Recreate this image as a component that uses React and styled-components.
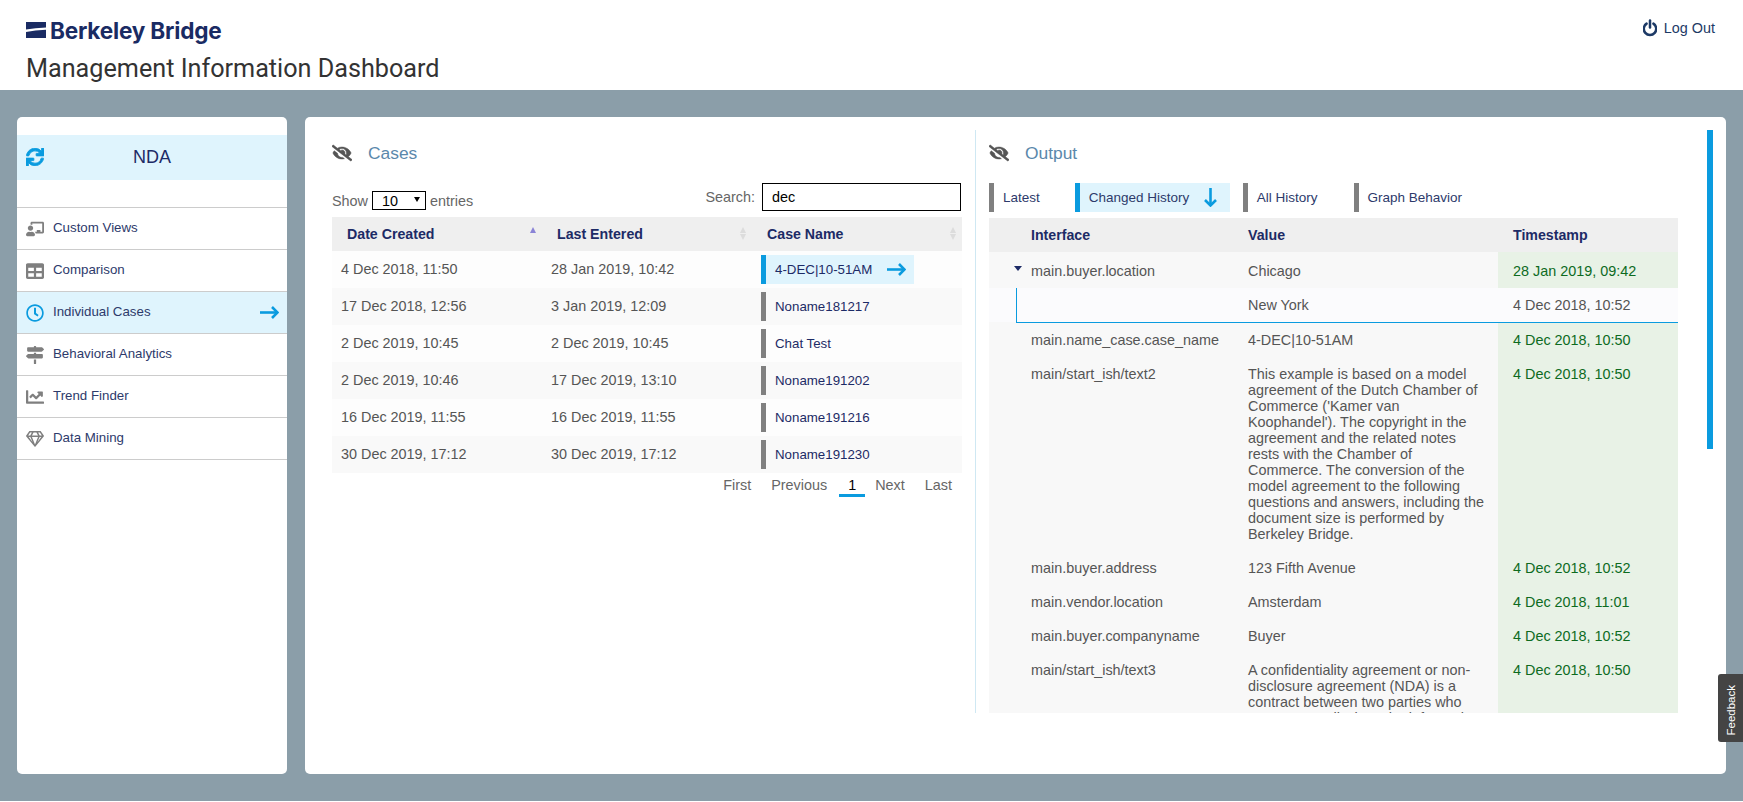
import React from "react";
import styled, { createGlobalStyle } from "styled-components";
import {
  FaChalkboardTeacher, FaTable, FaRegClock, FaMapSigns, FaChartLine, FaRegGem,
  FaEyeSlash, FaSync,
} from "react-icons/fa";

const Global = createGlobalStyle`
  html, body { margin: 0; padding: 0; background: #fff; }
  body { font-family: "Liberation Sans", Arial, sans-serif; font-size: 14.4px; color: #555; }
  * { box-sizing: border-box; }
`;

const Page = styled.div`display: flex; flex-direction: column; height: 801px; overflow: hidden;`;
const Header = styled.header`
  height: 90px; flex: none; background: #fff; padding: 0 28px 0 26px;
  display: flex; justify-content: space-between; align-items: flex-start;
`;
const Brand = styled.div`display: flex; flex-direction: column;`;
const Logo = styled.div`
  display: flex; align-items: center; gap: 4px; height: 24px; margin-top: 18px;
  font-family: Inter, sans-serif; font-weight: 700; font-size: 22.6px; letter-spacing: -0.2px; color: #1a2b63;
`;
const Title = styled.h1`
  margin: 9px 0 0; font-family: Roboto, sans-serif; font-weight: 400; font-size: 25.2px; line-height: 36px; color: #333;
`;
const LogOut = styled.a`
  display: flex; align-items: center; gap: 7px; margin-top: 18px; color: #1d3a66; font-size: 14.4px; line-height: 20px;
`;
const Main = styled.main`
  flex: 1; background: #8b9ea9; padding: 27px 17px; display: flex; gap: 18px; min-height: 0;
`;
const Sidebar = styled.aside`
  width: 270px; flex: none; background: #fff; border-radius: 5px; padding-top: 18px;
`;
const Project = styled.div`
  position: relative; height: 45px; background: #dff4fd; display: flex; align-items: center; justify-content: center;
  font-size: 18px; color: #1d2b66; margin-bottom: 27px;
  svg { position: absolute; left: 9px; top: 13px; color: #0a9bdf; stroke: currentColor; stroke-width: 24; }
`;
const Menu = styled.nav`border-top: 1px solid #ccc;`;
const MenuItem = styled.div`
  height: 42px; border-bottom: 1px solid #ccc; display: flex; align-items: center; padding: 0 8px 0 9px; gap: 9px;
  font-size: 13.3px; color: #2d3a6b;
  background: ${(p) => (p.$active ? "#dff4fd" : "#fff")};
  & > svg:first-child { color: ${(p) => (p.$active ? "#0a9bdf" : "#7f7f7f")}; width: 18px; flex: none; }
`;
const MenuLabel = styled.span`margin-bottom: 2px; flex: 1;`;
const Panel = styled.section`
  position: relative; flex: 1; background: #fff; border-radius: 5px; padding-top: 13px; display: flex; min-width: 0;
`;
const CasesPane = styled.div`
  width: 671px; height: 583px; flex: none; padding: 0 13px 0 27px; border-right: 1px solid #cfe8f3;
`;
const OutputPane = styled.div`width: 702px; height: 583px; padding-left: 13px; overflow: hidden;`;
const PaneTitle = styled.div`
  display: flex; align-items: center; gap: 16px; height: 46px; font-size: 17.4px; color: #5b88ab;
  svg { color: #555; width: 20px; height: 20px; stroke: currentColor; stroke-width: 16; }
`;
const Toolbar = styled.div`display: flex; justify-content: space-between; align-items: flex-end; height: 35px; margin-top: 6px; font-size: 14.4px; color: #666;`;
const Show = styled.label`display: flex; align-items: center; gap: 4px; height: 19px; margin-bottom: 7px;`;
const SelectWrap = styled.span`
  position: relative; display: block; width: 54px; height: 19px;
  &::after {
    content: ""; position: absolute; right: 6px; top: 6px; pointer-events: none;
    border-left: 3.5px solid transparent; border-right: 3.5px solid transparent; border-top: 5px solid #000;
  }
`;
const SelectBox = styled.select`
  appearance: none; display: block; width: 54px; height: 19px; border: 1px solid #000; border-radius: 0; background: #fff;
  font: 14.4px "Liberation Sans", sans-serif; padding: 0 0 0 9px; color: #000; outline: none;
`;
const SearchLabel = styled.label`display: flex; align-items: center; gap: 7px; margin: 0 1px 6px 0;`;
const SearchInput = styled.input`
  width: 199px; height: 28px; border: 1px solid #000; outline: none; padding: 0 9px; font: 14.4px "Liberation Sans", sans-serif; color: #000;
`;
const Table = styled.table`width: 100%; table-layout: fixed; border-collapse: collapse;`;
const Th = styled.th`
  position: relative; height: 34px; padding: 0 0 0 ${(p) => p.$pad}px; text-align: left; background: #efefef;
  font-size: 14.2px; font-weight: 700; color: #1d2b66;
`;
const Sort = styled.span`
  position: absolute; right: 5px; top: 10px; width: 7px; height: 14px;
  &::before, &::after { content: ""; position: absolute; left: 0; border-left: 3.5px solid transparent; border-right: 3.5px solid transparent; }
  &::before { top: 0; border-bottom: 6px solid ${(p) => (p.$active ? "#8a84d6" : "#dcdcdc")}; }
  &::after { top: 7px; border-top: 6px solid ${(p) => (p.$active ? "transparent" : "#dcdcdc")}; }
`;
const CaseRow = styled.tr`height: 37px; background: ${(p) => (p.$odd ? "#fdfdfd" : "#f9f9f9")};`;
const Td = styled.td`padding: 0 0 ${(p) => (p.$text ? 2 : 0)}px 9px; font-size: 14.4px; color: #555;`;
const CasePill = styled.div`
  width: 153px; height: 29px; border-left: 5px solid ${(p) => (p.$active ? "#0a9bdf" : "#808080")};
  background: ${(p) => (p.$active ? "#dff4fd" : "transparent")};
  display: flex; align-items: center; justify-content: space-between; padding: 0 8px 0 9px; font-size: 13.3px; color: #1d2b66;
`;
const Pager = styled.div`display: flex; justify-content: flex-end; height: 24px; line-height: 24px; font-size: 14.4px; color: #666;`;
const PageLink = styled.span`padding: 0 10px;`;
const PageCurrent = styled.span`
  width: 26px; height: 24px; margin: 0 0 0 2px; text-align: center; color: #000; border-bottom: 3px solid #0a9bdf;
`;
const Tabs = styled.div`display: flex; height: 29px; margin-top: 7px;`;
const Tab = styled.div`
  display: flex; align-items: center; justify-content: space-between; height: 29px; margin-right: 13px;
  border-left: 5px solid ${(p) => (p.$active ? "#0a9bdf" : "#808080")};
  background: ${(p) => (p.$active ? "#dff4fd" : "transparent")};
  padding: 0 ${(p) => (p.$active ? 13 : p.$tight ? 22 : 23)}px 0 9px; font-size: 13.5px; color: #2d3a6b;
  ${(p) => (p.$active ? "width: 155px;" : "")}
`;
const OutTable = styled.table`
  width: 689px; table-layout: fixed; border-collapse: collapse; margin-top: 6px;
`;
const OutTr = styled.tr`background: ${(p) => (p.$sub ? "#fbfbfd" : "#f8f8f8")};`;
const OutTd = styled.td`
  padding: ${(p) => p.$t}px 0 ${(p) => p.$b}px ${(p) => p.$pad}px;
  vertical-align: top; font-size: 14.4px; line-height: 16px; color: #555;
  ${(p) => (p.$stamp ? "background: #e8f2e6; color: #0d6b1f;" : "")}
`;
const SubTd = styled(OutTd)`position: relative;`;
const ValueText = styled.div`width: 242px;`;
const IfaceCell = styled.div`position: relative;`;
const Caret = styled.span`
  position: absolute; left: -17px; top: 3px; width: 0; height: 0;
  border-left: 4.5px solid transparent; border-right: 4.5px solid transparent; border-top: 5px solid #1d2b66;
`;
const SubGuide = styled.span`
  position: absolute; left: 27px; top: 0; bottom: -1px; width: 662px; border-left: 1px solid #0a9bdf; border-bottom: 1px solid #0a9bdf; pointer-events: none; z-index: 1;
`;
const ScrollThumb = styled.div`position: absolute; left: 1402px; top: 13px; width: 6px; height: 319px; background: #0a9bdf;`;
const Feedback = styled.div`
  position: fixed; right: 0; top: 674px; width: 25px; height: 68px; background: #444; color: #fff; border-radius: 3px 0 0 3px;
  font-size: 11.5px; display: flex; align-items: center; justify-content: center; padding-top: 4px;
  span { writing-mode: vertical-rl; transform: rotate(180deg); }
`;

const cases = [
  ["4 Dec 2018, 11:50", "28 Jan 2019, 10:42", "4-DEC|10-51AM"],
  ["17 Dec 2018, 12:56", "3 Jan 2019, 12:09", "Noname181217"],
  ["2 Dec 2019, 10:45", "2 Dec 2019, 10:45", "Chat Test"],
  ["2 Dec 2019, 10:46", "17 Dec 2019, 13:10", "Noname191202"],
  ["16 Dec 2019, 11:55", "16 Dec 2019, 11:55", "Noname191216"],
  ["30 Dec 2019, 17:12", "30 Dec 2019, 17:12", "Noname191230"],
];
const outputs = [
  ["main.name_case.case_name", "4-DEC|10-51AM", "4 Dec 2018, 10:50"],
  ["main/start_ish/text2", "This example is based on a model agreement of the Dutch Chamber of Commerce ('Kamer van Koophandel'). The copyright in the agreement and the related notes rests with the Chamber of Commerce. The conversion of the model agreement to the following questions and answers, including the document size is performed by Berkeley Bridge.", "4 Dec 2018, 10:50"],
  ["main.buyer.address", "123 Fifth Avenue", "4 Dec 2018, 10:52"],
  ["main.vendor.location", "Amsterdam", "4 Dec 2018, 11:01"],
  ["main.buyer.companyname", "Buyer", "4 Dec 2018, 10:52"],
  ["main/start_ish/text3", "A confidentiality agreement or non-disclosure agreement (NDA) is a contract between two parties who agree not to disclose the information", "4 Dec 2018, 10:50"],
];
const menu = [
  [FaChalkboardTeacher, "Custom Views"],
  [FaTable, "Comparison"],
  [FaRegClock, "Individual Cases", true],
  [FaMapSigns, "Behavioral Analytics"],
  [FaChartLine, "Trend Finder"],
  [FaRegGem, "Data Mining"],
];

const LogoMark = () => (
  <svg width="20" height="16" viewBox="0 0 20 16">
    <path d="M0 0H20V5.5Q9 6 0 7.5Z" fill="#1a2b63" />
    <path d="M0 10Q9 8.2 20 7.8V16H0Z" fill="#1a2b63" />
  </svg>
);
const ArrowRight = () => (
  <svg width="19" height="13" viewBox="0 0 19 13" fill="none" stroke="#0a9bdf" strokeWidth="2.6">
    <path d="M0 6.5H17.5" />
    <path d="M12 1L17.5 6.5L12 12" />
  </svg>
);
const ArrowDown = () => (
  <svg width="13" height="19" viewBox="0 0 13 19" fill="none" stroke="#0a9bdf" strokeWidth="2.6">
    <path d="M6.5 0V17.5" />
    <path d="M1 12L6.5 17.5L12 12" />
  </svg>
);
const PowerIcon = () => (
  <svg width="14" height="18" viewBox="0 0 14 18" fill="none" stroke="#1d3a66" strokeWidth="2.5" strokeLinecap="round">
    <path d="M3.6 4.6A6.2 6.2 0 1 0 10.4 4.6" />
    <path d="M7 1.4V8.4" />
  </svg>
);

export default function App() {
  return (
    <Page>
      <Global />
      <Header>
        <Brand>
          <Logo><LogoMark />Berkeley Bridge</Logo>
          <Title>Management Information Dashboard</Title>
        </Brand>
        <LogOut><PowerIcon />Log Out</LogOut>
      </Header>
      <Main>
        <Sidebar>
          <Project><FaSync size={18} />NDA</Project>
          <Menu>
            {menu.map(([Icon, label, active]) => (
              <MenuItem key={label} $active={active}>
                <Icon size={18} />
                <MenuLabel>{label}</MenuLabel>
                {active && <ArrowRight />}
              </MenuItem>
            ))}
          </Menu>
        </Sidebar>
        <Panel>
          <CasesPane>
            <PaneTitle><FaEyeSlash />Cases</PaneTitle>
            <Toolbar>
              <Show>
                Show
                <SelectWrap><SelectBox defaultValue="10"><option>10</option></SelectBox></SelectWrap>
                entries
              </Show>
              <SearchLabel>Search: <SearchInput defaultValue="dec" /></SearchLabel>
            </Toolbar>
            <Table>
              <thead>
                <tr>
                  <Th $pad={15}>Date Created<Sort $active /></Th>
                  <Th $pad={15}>Last Entered<Sort /></Th>
                  <Th $pad={15}>Case Name<Sort /></Th>
                </tr>
              </thead>
              <tbody>
                {cases.map((c, i) => (
                  <CaseRow key={c[2]} $odd={i % 2 === 0}>
                    <Td $text>{c[0]}</Td>
                    <Td $text>{c[1]}</Td>
                    <Td>
                      <CasePill $active={i === 0}>
                        {c[2]}
                        {i === 0 && <ArrowRight />}
                      </CasePill>
                    </Td>
                  </CaseRow>
                ))}
              </tbody>
            </Table>
            <Pager>
              <PageLink>First</PageLink>
              <PageLink>Previous</PageLink>
              <PageCurrent>1</PageCurrent>
              <PageLink>Next</PageLink>
              <PageLink>Last</PageLink>
            </Pager>
          </CasesPane>
          <OutputPane>
            <PaneTitle><FaEyeSlash />Output</PaneTitle>
            <Tabs>
              <Tab $tight>Latest</Tab>
              <Tab $active>Changed History<ArrowDown /></Tab>
              <Tab>All History</Tab>
              <Tab>Graph Behavior</Tab>
            </Tabs>
            <OutTable>
              <colgroup>
                <col style={{ width: 259 }} />
                <col style={{ width: 250 }} />
                <col style={{ width: 180 }} />
              </colgroup>
              <thead>
                <tr>
                  <Th $pad={42}>Interface</Th>
                  <Th $pad={0}>Value</Th>
                  <Th $pad={15}>Timestamp</Th>
                </tr>
              </thead>
              <tbody>
                <OutTr>
                  <OutTd $t={11} $b={9} $pad={42}><IfaceCell><Caret />main.buyer.location</IfaceCell></OutTd>
                  <OutTd $t={11} $b={9} $pad={0}>Chicago</OutTd>
                  <OutTd $t={11} $b={9} $pad={15} $stamp>28 Jan 2019, 09:42</OutTd>
                </OutTr>
                <OutTr $sub>
                  <SubTd $t={9} $b={9} $pad={42}><SubGuide />&nbsp;</SubTd>
                  <OutTd $t={9} $b={9} $pad={0}>New York</OutTd>
                  <OutTd $t={9} $b={9} $pad={15}>4 Dec 2018, 10:52</OutTd>
                </OutTr>
                {outputs.map((r) => (
                  <OutTr key={r[0]}>
                    <OutTd $t={10} $b={8} $pad={42}>{r[0]}</OutTd>
                    <OutTd $t={10} $b={8} $pad={0}><ValueText>{r[1]}</ValueText></OutTd>
                    <OutTd $t={10} $b={8} $pad={15} $stamp>{r[2]}</OutTd>
                  </OutTr>
                ))}
              </tbody>
            </OutTable>
          </OutputPane>
          <ScrollThumb />
        </Panel>
      </Main>
      <Feedback><span>Feedback</span></Feedback>
    </Page>
  );
}
